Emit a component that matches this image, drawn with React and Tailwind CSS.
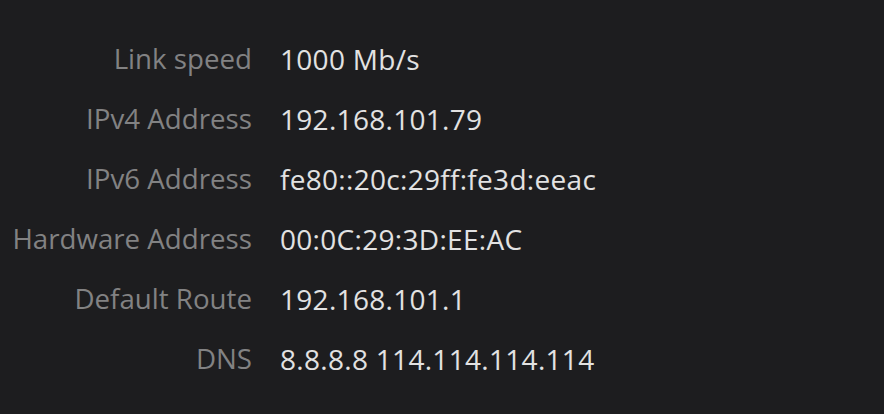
import React from 'react';

const rows = [
    ['Link speed', '1000 Mb/s'],
    ['IPv4 Address', '192.168.101.79'],
    ['IPv6 Address', 'fe80::20c:29ff:fe3d:eeac'],
    ['Hardware Address', '00:0C:29:3D:EE:AC'],
    ['Default Route', '192.168.101.1'],
    ['DNS', '8.8.8.8 114.114.114.114'],
];

export default function App() {
    return (
        <div className="w-[884px] h-[414px] bg-[#1d1d1f] pt-[29px] font-['Open_Sans',sans-serif] text-[28px]">
            <div className="grid grid-cols-[252px_1fr] gap-x-[28px]">
                {rows.map(([label, value]) => (
                    <React.Fragment key={label}>
                        <div className="h-[60px] flex items-center justify-end text-[27.7px] text-[#828283] whitespace-nowrap">{label}</div>
                        <div className="h-[60px] flex items-center text-[#e2e2e2] tracking-[0.3px] whitespace-nowrap">{value}</div>
                    </React.Fragment>
                ))}
            </div>
        </div>
    );
}
